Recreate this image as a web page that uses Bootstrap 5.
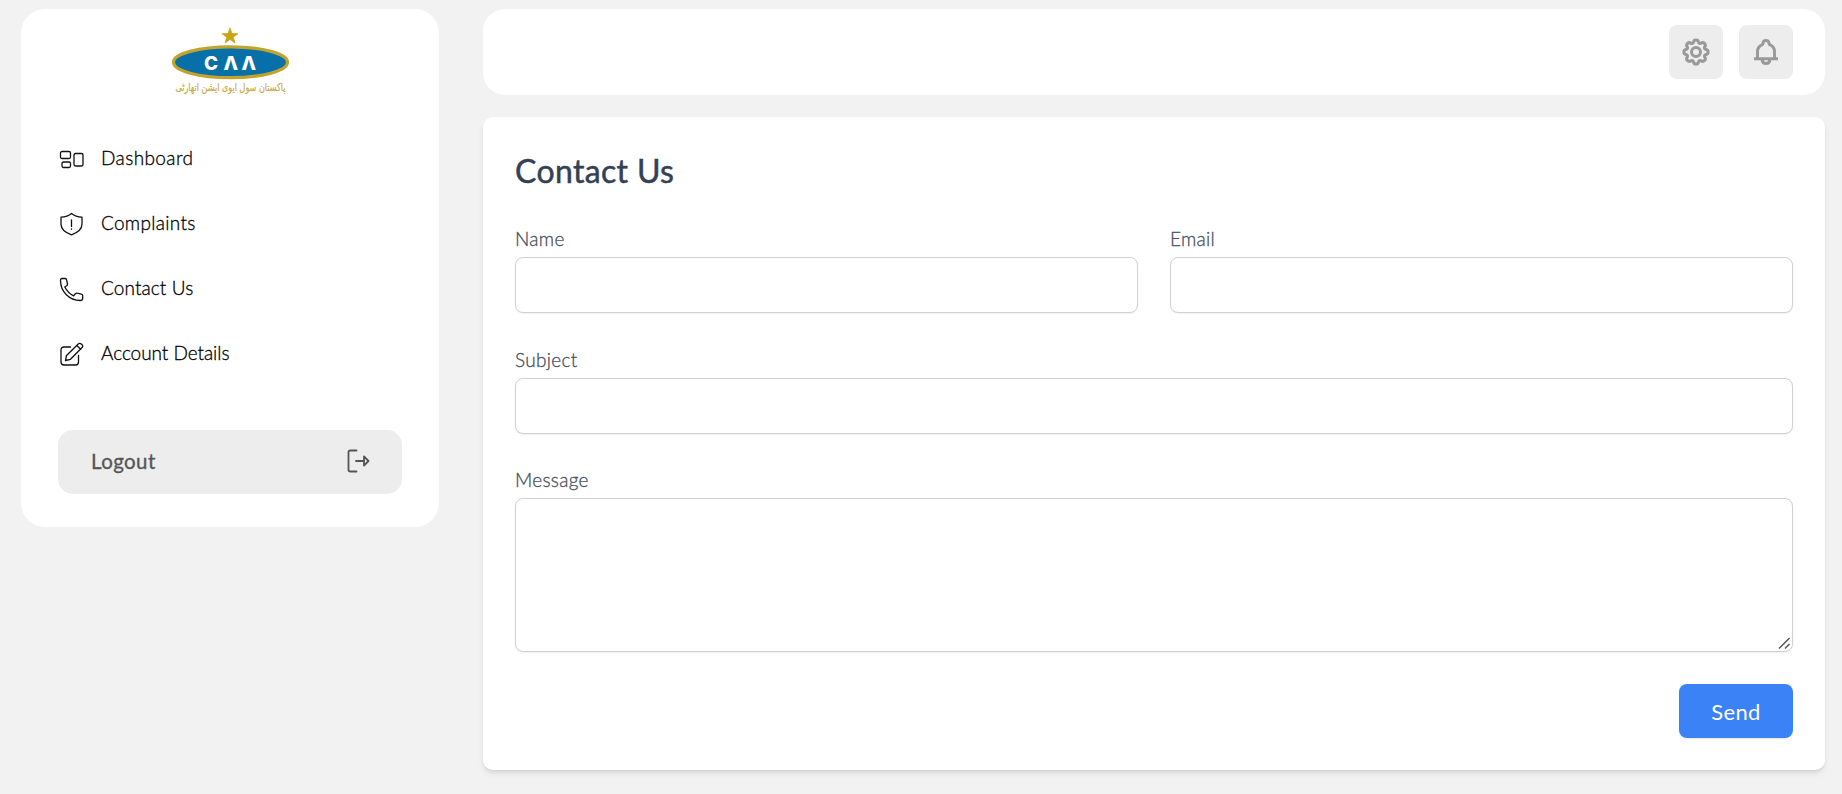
<!DOCTYPE html>
<html lang="en">
<head>
<meta charset="utf-8">
<meta name="viewport" content="width=device-width, initial-scale=1">
<title>Contact Us</title>
<link href="https://cdn.jsdelivr.net/npm/bootstrap@5.3.0/dist/css/bootstrap.min.css" rel="stylesheet">
<style>
body{background:#f2f2f2;font-family:Lato,"Open Sans",sans-serif;height:794px;overflow:hidden}
.shell{padding:9px 17px 0 21px;gap:44px}
.side{width:418px;height:518px;border-radius:24px;padding:17px 37px 33px}
.brand-logo{width:124px;height:76px;margin-left:-1px;overflow:visible}
.menu{margin-top:23px}
.menu a{height:65px;padding-left:1px;color:#000;font-size:19px;font-weight:300;gap:16px;line-height:24px}
.menu svg{width:26px;height:26px;fill:none;stroke:#111;stroke-width:1.3;stroke-linejoin:round;stroke-linecap:round;margin-top:5px}
.menu span{-webkit-text-stroke:.3px #000}
.logout{height:64px;border-radius:15px;background:#ededed;color:#555;font-size:20.5px;letter-spacing:.4px;padding:0 32px 2px 33px;-webkit-text-stroke:.3px #555}
.topbar{height:86px;border-radius:22px;padding:16px 32px;gap:16px}
.tool{width:54px;height:54px;border-radius:8px;background:#ededed}
.tool svg{fill:none;stroke:#999;stroke-width:2.9;stroke-linejoin:round}
.panel{margin-top:22px;height:653px;border-radius:10px;padding:32px;box-shadow:0 4px 6px -1px rgba(0,0,0,.1),0 2px 4px -2px rgba(0,0,0,.1)}
.panel h1{font-size:32px;line-height:44px;font-weight:400;color:#334155;margin-bottom:32px;letter-spacing:.35px;-webkit-text-stroke:.5px #334155}
.fields{display:grid;grid-template-columns:1fr 1fr;column-gap:32px;row-gap:32.5px}
.fields label{display:block;font-size:19px;line-height:27px;height:32px;color:#3f4957;font-weight:300;letter-spacing:.3px;-webkit-text-stroke:.3px #4b5563}
.fields .form-control{height:56px;border-color:#d1d1d4;border-radius:8px;box-shadow:0 1px 2px rgba(0,0,0,.06)}
.fields textarea.form-control{height:154px;resize:none}
.grip{right:2px;bottom:2px;pointer-events:none}
.wide{grid-column:1/3}
.send{width:114px;height:54px;border-radius:8px;background:#3b82f6;color:#fff;font-size:22px;letter-spacing:.3px;margin-top:32px;padding:0;border:0;box-shadow:0 1px 2px rgba(0,0,0,.1)}
</style>
</head>
<body>
<div class="shell d-flex align-items-start">
  <aside class="side bg-white d-flex flex-column flex-shrink-0">
    <svg class="brand-logo align-self-center" viewBox="168 26 124 76">
      <path d="M230 28l2 5.600 6 .1-4.800 3.500 1.800 5.800-5-3.500-5 3.500 1.800-5.800-4.800-3.500 6-.1z" fill="#c9a516" stroke="#c9a516" stroke-width=".8"/>
      <ellipse cx="230.500" cy="62.300" rx="57" ry="15.400" fill="#0870a8" stroke="#c2a32c" stroke-width="3.200"/>
      <text x="204 223.500 241.500" y="70" font-family="Inter,sans-serif" font-weight="800" font-size="19" fill="#fff">CΛΛ</text>
      <text x="230.500" y="90.500" text-anchor="middle" direction="rtl" font-family="'DejaVu Sans',sans-serif" font-size="11" fill="#c9a843" stroke="#c9a843" stroke-width=".2" textLength="110" lengthAdjust="spacingAndGlyphs">پاکستان سول ایوی ایشن اتھارٹی</text>
    </svg>
    <nav class="menu d-flex flex-column">
      <a href="#" class="d-flex align-items-center text-decoration-none"><svg viewBox="0 0 26 26"><rect x="1.500" y="4.500" width="10" height="7" rx="1.500"/><rect x="3" y="15" width="8.500" height="5.500" rx="1.500"/><rect x="15" y="6.500" width="9" height="12.500" rx="1.500"/></svg><span style="letter-spacing:.4px">Dashboard</span></a>
      <a href="#" class="d-flex align-items-center text-decoration-none"><svg viewBox="0 0 26 26"><path d="M12.500 1.500C9.500 4 6 5 2 5.200V12c0 5 4 8.500 10.500 10.800C19 20.500 23 17 23 12V5.200C19 5 15.500 4 12.500 1.500zM12.500 8v6.500M12.500 16.800v.5"/></svg><span style="letter-spacing:.3px">Complaints</span></a>
      <a href="#" class="d-flex align-items-center text-decoration-none"><svg viewBox="0 0 26 26"><path d="M3 1.500h3c1 0 1.500.5 1.600 1.300L8.500 7c.1.700-.2 1.200-.8 1.700L5.800 10c2 4 4.600 6.700 8.800 8.800l1.800-2c.5-.6 1-.8 1.700-.6l4.200.9c.9.200 1.400.8 1.400 1.600v2.500c0 1.600-.9 2.300-2.500 2.300C10.500 23.500 1.500 15 1.500 3.600c0-1.200.3-2.100 1.500-2.100z"/></svg><span style="letter-spacing:.1px">Contact Us</span></a>
      <a href="#" class="d-flex align-items-center text-decoration-none"><svg viewBox="0 0 26 26"><path d="M11.500 5H5C3 5 2 6 2 8v12c0 2 1 3 3 3h11.500c2 0 3-1 3-3v-6.500M6.500 18.500l1-5L19.500 1.800c1.500-1.500 5.500 1.500 3.800 3.500L11.500 17.300zM17.800 3.500l3.900 3.700"/></svg><span style="letter-spacing:-.05px">Account Details</span></a>
    </nav>
    <button class="logout btn d-flex align-items-center justify-content-between mt-auto w-100 border-0">Logout
      <svg width="24" height="24" viewBox="0 0 24 24" fill="none" stroke="#555" stroke-width="1.800" stroke-linejoin="round" stroke-linecap="round"><path d="M10.500 1.500h-6c-1.200 0-2 .5-2 1.800v17.400c0 1.300.8 1.800 2 1.800h6M10 12h8M18 7.500v9l4.500-4.500z"/></svg></button>
  </aside>
  <main class="flex-grow-1">
    <header class="topbar bg-white d-flex justify-content-end">
      <div class="tool d-flex align-items-center justify-content-center"><svg width="28" height="28" viewBox="0 0 28 28"><circle cx="14" cy="14" r="4.500"/><path transform="translate(14 14) scale(1.060) translate(-14 -14)" d="M11.700 4.500C12 2 16 2 16.300 4.500c.3 1.500 1.500 1.900 2.700 1.100 2.200-1.400 4.800 1.200 3.400 3.400-.8 1.200-.4 2.400 1.100 2.700 2.500.3 2.500 4.300 0 4.600-1.500.3-1.900 1.500-1.100 2.700 1.400 2.200-1.200 4.800-3.400 3.400-1.200-.8-2.400-.4-2.700 1.100-.3 2.500-4.300 2.500-4.600 0-.3-1.500-1.500-1.900-2.700-1.100-2.200 1.400-4.800-1.200-3.400-3.400.8-1.200.4-2.400-1.100-2.700-2.500-.3-2.500-4.300 0-4.600 1.500-.3 1.900-1.500 1.100-2.700-1.400-2.200 1.200-4.800 3.400-3.400 1.200.8 2.400.4 2.700-1.100z"/></svg></div>
      <div class="tool d-flex align-items-center justify-content-center"><svg width="28" height="28" viewBox="0 0 28 28"><path d="M2 20.800h24M5.500 20.500V13.500c0-3.500 2-6 5.300-7.200C11 1.300 17 1.300 17.200 6.300c3.300 1.200 5.300 3.700 5.300 7.200v7M10 21.500c.5 5.300 7.500 5.300 8 0"/></svg></div>
    </header>
    <section class="panel bg-white">
      <h1 class="mt-0">Contact Us</h1>
      <form>
        <div class="fields">
          <div><label for="name">Name</label><input id="name" class="form-control"></div>
          <div><label for="email">Email</label><input id="email" class="form-control"></div>
          <div class="wide"><label for="subject">Subject</label><input id="subject" class="form-control"></div>
          <div class="wide position-relative"><label for="message">Message</label><textarea id="message" class="form-control"></textarea>
            <svg class="grip position-absolute" width="13" height="13" viewBox="0 0 13 13" stroke="#555" stroke-width="1.500"><path d="M1 11.500L11.500 1M7 11.500L11.500 7"/></svg></div>
        </div>
        <div class="d-flex justify-content-end"><button type="button" class="btn send">Send</button></div>
      </form>
    </section>
  </main>
</div>
<script src="https://cdn.jsdelivr.net/npm/bootstrap@5.3.0/dist/js/bootstrap.bundle.min.js"></script>
</body>
</html>
